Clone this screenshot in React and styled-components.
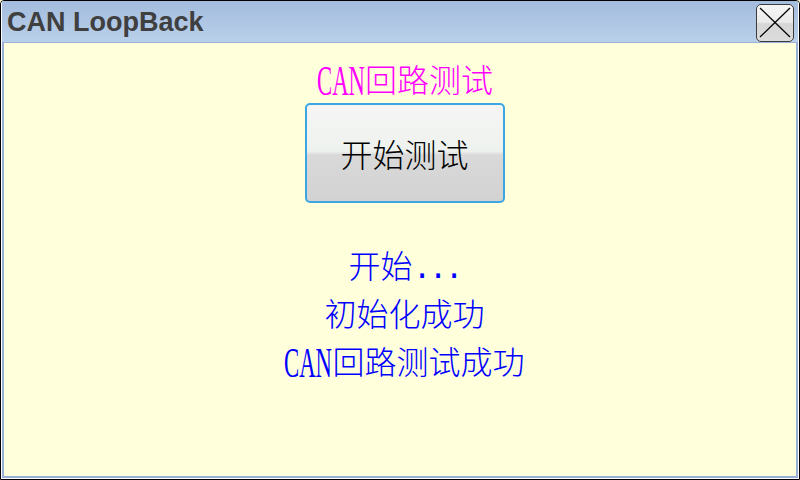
import React from "react";
import styled, { createGlobalStyle } from "styled-components";

const Global = createGlobalStyle`
  html, body {
    margin: 0;
    padding: 0;
    width: 800px;
    height: 480px;
    overflow: hidden;
    background: #ffffdc;
  }
`;

// split a message into latin "CAN", CJK body and a trailing ellipsis
function Message({ text }) {
  const m = text.match(/^(CAN)?(.*?)(\.\.\.)?$/);
  return (
    <>
      {m[1] && <Latin>{m[1]}</Latin>}
      {m[2]}
      {m[3] && <Dots>{m[3]}</Dots>}
    </>
  );
}

export default function App() {
  const lines = ["开始...", "初始化成功", "CAN回路测试成功"];

  return (
    <Window>
      <Global />
      <Frame>
        <TitleBar>
          <Title>CAN LoopBack</Title>
          <CloseButton aria-label="close">
            <svg width="36" height="35" viewBox="0 0 36 35">
              <line x1="3" y1="3" x2="33" y2="32" stroke="#000" strokeWidth="1.3" />
              <line x1="33" y1="3" x2="3" y2="32" stroke="#000" strokeWidth="1.3" />
            </svg>
          </CloseButton>
        </TitleBar>
        <Body>
          <Heading>
            <Message text="CAN回路测试" />
          </Heading>
          <StartButton>开始测试</StartButton>
          <Log>
            {lines.map((l) => (
              <LogLine key={l}>
                <Message text={l} />
              </LogLine>
            ))}
          </Log>
        </Body>
      </Frame>
    </Window>
  );
}

const Window = styled.div`
  box-sizing: border-box;
  width: 800px;
  height: 480px;
  border: 1px solid #000;
  border-radius: 4px 4px 0 0;
  overflow: hidden;
`;

const Frame = styled.div`
  box-sizing: border-box;
  height: 100%;
  display: flex;
  flex-direction: column;
  border: 1px solid #ffffff;
  border-top: none;
  border-radius: 3px 3px 0 0;
`;

const TitleBar = styled.div`
  height: 41px;
  flex: none;
  display: flex;
  align-items: center;
  justify-content: space-between;
  padding: 0 4px 0 5px;
  background: linear-gradient(#a4bcdd, #b9d0ea);
  border-bottom: 1px solid #9ab2da;
`;

const Title = styled.div`
  font-family: "Liberation Sans", Arial, sans-serif;
  font-weight: bold;
  font-size: 27px;
  color: #3f3f3f;
  margin-top: 1px;
`;

const CloseButton = styled.div`
  box-sizing: border-box;
  width: 38px;
  height: 38px;
  margin-top: 2px;
  border: 1px solid #3c3c3c;
  border-radius: 5px;
  background: linear-gradient(#f6f6f6 0%, #eaeaea 48%, #d6d6d6 52%, #dcdcdc 100%);
  display: flex;
  align-items: center;
  justify-content: center;
`;

const Body = styled.div`
  flex: 1;
  display: flex;
  flex-direction: column;
  align-items: center;
  background: #ffffdc;
  border: 2px solid #98b0d8;
  border-top: none;
  padding-top: 17px;
  font-family: "Noto Sans CJK SC", sans-serif;
  font-weight: 300;
`;

const Latin = styled.span`
  display: inline-block;
  font-family: "Liberation Serif", serif;
  font-weight: normal;
  line-height: 1;
  transform: scale(0.71, 1.35);
  transform-origin: 0 60%;
  margin-right: -0.61em;
`;

const Dots = styled.span`
  font-family: "Liberation Mono", monospace;
  font-weight: normal;
  letter-spacing: -0.1em;
  line-height: 1;
`;

const Heading = styled.div`
  height: 36px;
  font-size: 32px;
  line-height: 36px;
  color: #ff00ff;
  margin-left: 10px;
`;

const StartButton = styled.div`
  box-sizing: border-box;
  margin: 7px 0 0 9px;
  width: 200px;
  height: 100px;
  border: 2px solid #3ba6e2;
  border-radius: 5px;
  background: linear-gradient(#f5f5f5 0%, #eef2ee 48%, #d9d9d9 52%, #d2d2d2 100%);
  display: flex;
  align-items: center;
  justify-content: center;
  font-size: 32px;
  color: #000;
`;

const Log = styled.div`
  margin: 37px 0 0 9px;
  display: flex;
  flex-direction: column;
  align-items: center;
`;

const LogLine = styled.div`
  height: 48px;
  font-size: 32px;
  line-height: 48px;
  color: #0000ff;
`;
